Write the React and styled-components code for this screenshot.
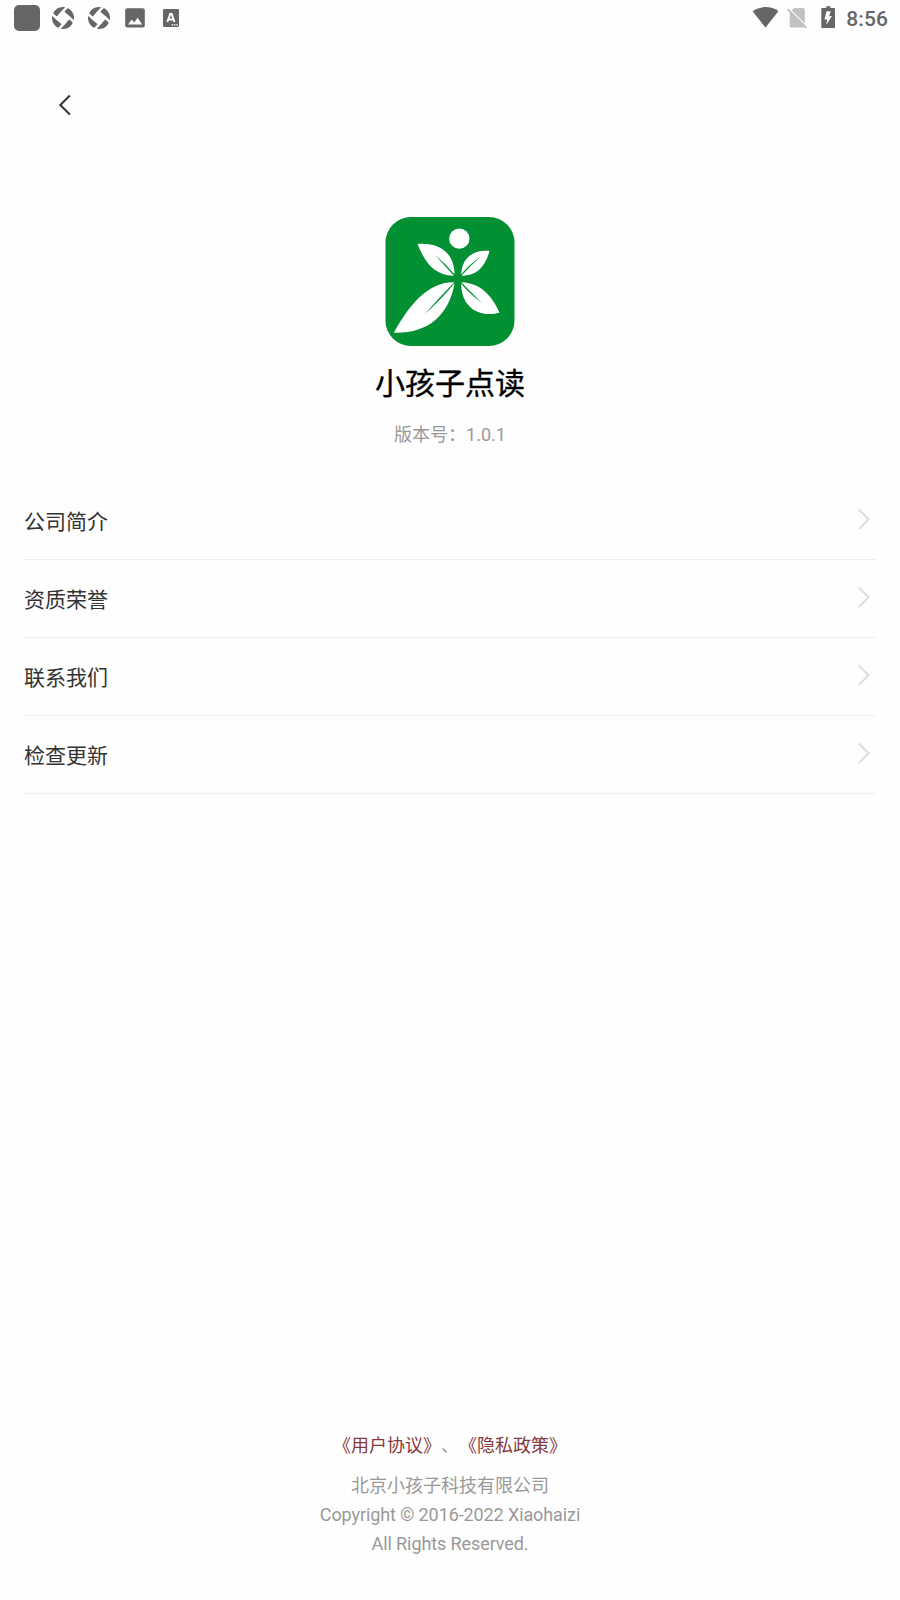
import React from 'react'
import styled, { createGlobalStyle } from 'styled-components'

const GlobalStyle = createGlobalStyle`
  * {
    box-sizing: border-box;
  }
  body {
    margin: 0;
    background-color: #fefefe;
    font-family: Roboto, "Noto Sans CJK SC", sans-serif;
  }
`

const Page = styled.div`
  display: flex;
  flex-direction: column;
  height: 1600px;
  width: 900px;
`
const StatusBar = styled.header`
  align-items: center;
  color: #666;
  display: flex;
  height: 36px;
  justify-content: space-between;
  padding: 0 12px 0 14px;
`
const StatusGroup = styled.div`
  align-items: center;
  display: flex;
  height: 36px;

  & svg {
    display: block;
  }
`
const AppBlock = styled.span`
  background-color: #666;
  border-radius: 5px;
  height: 26px;
  margin-right: 5px;
  width: 26px;
`
const Clock = styled.span`
  font-size: 21px;
  font-weight: 500;
  letter-spacing: 0.1px;
  line-height: 36px;
  padding-top: 1px;
  text-align: right;
  width: 46px;
`
const NavBar = styled.nav`
  height: 138px;
  padding: 57px 0 0 53px;
`
const BackButton = styled.button`
  background: none;
  border: 0;
  cursor: pointer;
  display: block;
  height: 24px;
  padding: 0;
  width: 24px;

  & svg {
    display: block;
  }
`
const Brand = styled.section`
  align-items: center;
  display: flex;
  flex-direction: column;
  height: 308px;
  padding-top: 43px;
`
const Title = styled.h1`
  -webkit-text-stroke: 0.35px #000;
  color: #000;
  font-size: 30px;
  font-weight: 400;
  line-height: 40px;
  margin: 18px 0 0;
`
const Version = styled.p`
  color: #999;
  font-size: 18px;
  line-height: 26px;
  margin: 18px 0 0;
`
const Menu = styled.ul`
  list-style: none;
  margin: 0;
  padding: 0 24px;
`
const MenuItem = styled.li`
  align-items: center;
  border-bottom: 1px solid #eee;
  color: #333;
  display: flex;
  font-size: 21px;
  height: 78px;
  justify-content: space-between;
  line-height: 30px;
  padding: 2px 4px 0 0;

  & svg {
    margin-bottom: 5px;
  }
`
const Footer = styled.footer`
  color: #999;
  font-size: 18px;
  line-height: 29px;
  margin-top: auto;
  padding-bottom: 42px;
  text-align: center;
  text-spacing-trim: space-all;

  & p {
    margin: 0;
  }
`
const Links = styled.div`
  margin-bottom: 11px;
`
const Link = styled.a`
  color: #833a3a;
  cursor: pointer;
`
const Copyright = styled.p`
  letter-spacing: -0.1px;
`

const ShutterIcon = () => (
  <svg width="36" height="36" viewBox="-18 -18 36 36">
    <circle r="11" fill="#666" />
    <path d="M-6 -1.5 L1.5 -6 L6 1.5 L-1.5 6 Z" fill="#fefefe" />
    {[0, 90, 180, 270].map((angle) => (
      <path
        key={angle}
        transform={`rotate(${angle})`}
        d="M1 1 L-6.2 -1.2 Q-2.5 -6.2 2.6 -11.2 L5.4 -10.2 Q2.6 -8.3 1.5 -6 Z"
        fill="#fefefe"
      />
    ))}
  </svg>
)

const PictureIcon = () => (
  <svg width="36" height="36" viewBox="0 0 36 36">
    <rect x="8.2" y="8.2" width="19.6" height="19.4" rx="2" fill="#666" />
    <path d="M11 24.4 L14.7 19.4 L17.2 22.4 L20.6 17.8 L25.2 24.4 Z" fill="#fefefe" />
  </svg>
)

const KeyboardIcon = () => (
  <svg width="36" height="36" viewBox="0 0 36 36">
    <rect x="10" y="9" width="16" height="18" rx="1.2" fill="#666" />
    <path d="M14.3 22 L17.2 14 H18.6 L21.5 22 M15.7 19.4 H20.1" fill="none" stroke="#fefefe" strokeWidth="2" />
    <path d="M18.5 24.9 H25" stroke="#fefefe" strokeWidth="1.4" strokeDasharray="1.6 0.8" />
  </svg>
)

const WifiIcon = () => (
  <svg width="34" height="36" viewBox="0 0 34 36">
    <path d="M4.6 11.3 C11.5 5.7 23.5 5.7 30.4 11.3 L17.5 27.6 Z" fill="#666" />
  </svg>
)

const NoSimIcon = () => (
  <svg width="36" height="36" viewBox="0 0 36 36">
    <path d="M9.6 10.4 L12 8 H21 Q22.8 8 22.8 9.6 V23.4 Z" fill="#c2c2c2" />
    <path d="M7.7 11.8 L22.6 26.4 Q22.6 27.6 21 27.6 H9.3 Q7.7 27.6 7.7 26 Z" fill="#c2c2c2" />
    <path d="M5.8 9.4 L24.6 27.8" stroke="#bbb" strokeWidth="1.6" />
  </svg>
)

const BatteryIcon = () => (
  <svg width="24" height="36" viewBox="0 0 24 36">
    <path d="M8.3 6.2 H12.4 V8 H16 Q17 8 17 9 V27 Q17 28 16 28 H4.3 Q3.3 28 3.3 27 V9 Q3.3 8 4.3 8 H8.3 Z" fill="#666" />
    <path d="M8.6 11.2 H12.6 L11.2 16 H14 L8.2 25 L9.2 19.6 H6.5 Z" fill="#fefefe" />
  </svg>
)

const ChevronLeft = () => (
  <svg width="24" height="24" viewBox="0 0 24 24">
    <path d="M16.9 2.5 L7.3 12 L16.9 21.5" fill="none" stroke="#333" strokeWidth="2" />
  </svg>
)

const ChevronRight = () => (
  <svg width="16" height="24" viewBox="0 0 16 24">
    <path d="M2.8 2.5 L12.6 12.3 L2.8 22.1" fill="none" stroke="#ddd" strokeWidth="2" />
  </svg>
)

const Logo = () => (
  <svg width="130" height="129" viewBox="29.5 36 390 387">
    <rect x="31" y="36" width="387" height="387" rx="76" fill="#029032" />
    <g fill="#fff">
      <circle cx="252.5" cy="101" r="30.5" />
      <path d="M127 117 C183 112 237 136 238 207 L234 212 C178 210 151 176 127 117 Z" />
      <path d="M343 138 C331 184 305 212 261 212 L258 206 C262 157 294 134 343 138 Z" />
      <path d="M56 383 C99 306 154 232 235 232 L238 237 C219 335 155 386 56 383 Z" />
      <path d="M373 323 C304 341 258 299 258 237 L261 232 C315 236 347 267 373 323 Z" />
    </g>
    <g fill="#029032">
      <path d="M179 149 Q212 176 238 208 L235 211 Q210 183 179 149 Z" />
      <path d="M315 156 Q289 179 260 211 L258 208 Q284 177 315 156 Z" />
      <path d="M148 328 Q188 282 236 233 L238 235 Q200 282 148 328 Z" />
      <path d="M320 293 Q284 267 258 236 L260 233 Q285 259 320 293 Z" />
    </g>
  </svg>
)

const menuItems = ['公司简介', '资质荣誉', '联系我们', '检查更新']

const App = () => (
  <>
    <GlobalStyle />
    <Page lang="zh-CN">
      <StatusBar>
        <StatusGroup>
          <AppBlock />
          <ShutterIcon />
          <ShutterIcon />
          <PictureIcon />
          <KeyboardIcon />
        </StatusGroup>
        <StatusGroup>
          <WifiIcon />
          <NoSimIcon />
          <BatteryIcon />
          <Clock>8:56</Clock>
        </StatusGroup>
      </StatusBar>
      <NavBar>
        <BackButton aria-label="返回"><ChevronLeft /></BackButton>
      </NavBar>
      <Brand>
        <Logo />
        <Title>小孩子点读</Title>
        <Version>版本号：1.0.1</Version>
      </Brand>
      <Menu>
        {menuItems.map((item) => (
          <MenuItem key={item}>
            {item}
            <ChevronRight />
          </MenuItem>
        ))}
      </Menu>
      <Footer>
        <Links><Link>《用户协议》</Link>、<Link>《隐私政策》</Link></Links>
        <p>北京小孩子科技有限公司</p>
        <Copyright>Copyright © 2016-2022 Xiaohaizi</Copyright>
        <Copyright>All Rights Reserved.</Copyright>
      </Footer>
    </Page>
  </>
)

export default App
